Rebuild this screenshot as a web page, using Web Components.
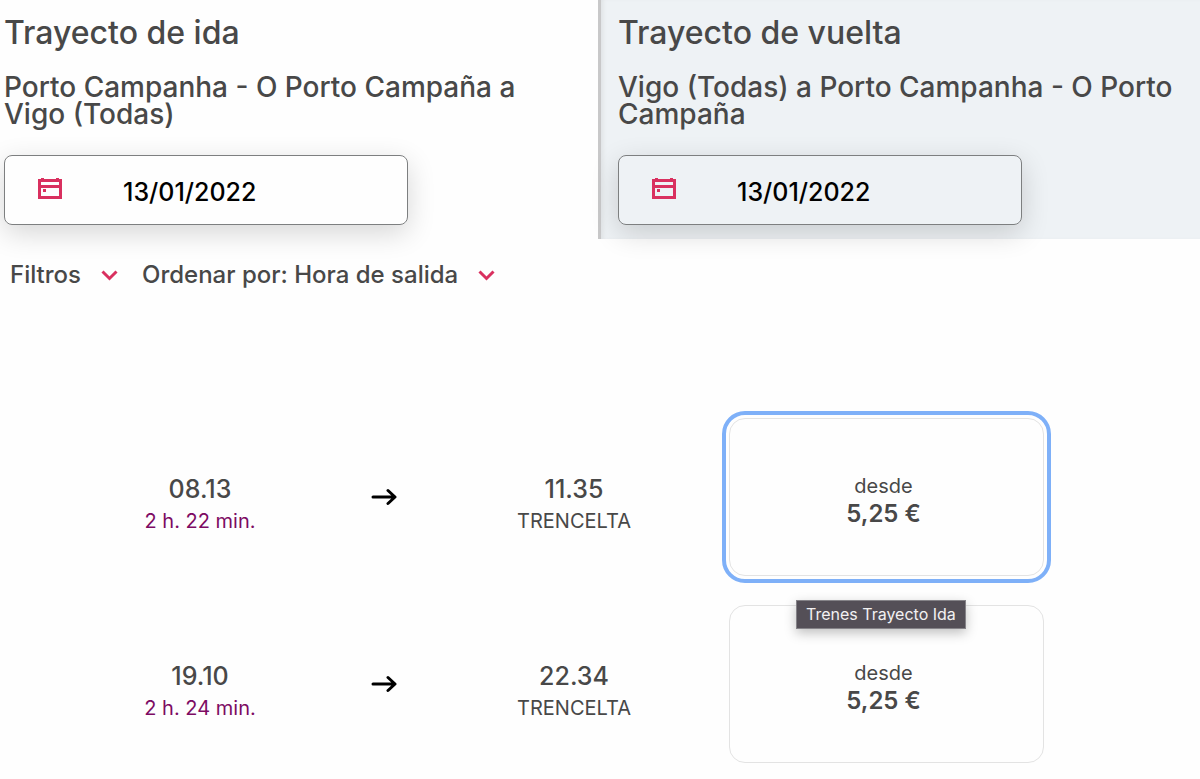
<!DOCTYPE html>
<html lang="es">
<head>
<meta charset="utf-8">
<meta name="viewport" content="width=device-width, initial-scale=1">
<title>Trayectos</title>
<style>
  body { margin: 0; background: #fefefe; color: #484848; font-family: Inter, "Liberation Sans", sans-serif; }
</style>
</head>
<body>
<trip-page></trip-page>

<template id="trip-page">
  <style>
    :host { display: block; }
    .journeys { display: grid; grid-template-columns: 1fr 1fr; }
    .results { padding: 109px 13% 16px 9%; display: grid; gap: 29px; }
  </style>
  <header class="journeys">
    <journey-panel date="13/01/2022">
      <span slot="title">Trayecto de ida</span>
      <span slot="route">Porto Campanha - O Porto Campaña a Vigo (Todas)</span>
    </journey-panel>
    <journey-panel date="13/01/2022" inactive>
      <span slot="title">Trayecto de vuelta</span>
      <span slot="route">Vigo (Todas) a Porto Campanha - O Porto Campaña</span>
    </journey-panel>
  </header>
  <filter-bar></filter-bar>
  <main class="results">
    <train-row depart="08.13" duration="2 h. 22 min." arrive="11.35" train="TRENCELTA" price="5,25 €" tip="Trenes Trayecto Ida" selected></train-row>
    <train-row depart="19.10" duration="2 h. 24 min." arrive="22.34" train="TRENCELTA" price="5,25 €"></train-row>
  </main>
</template>

<template id="journey-panel">
  <style>
    :host { display: block; box-sizing: border-box; padding: 16px 24px 14px 4px; }
    :host([inactive]) { background: #eef2f5; border-left: 3px solid #c8c8c9; padding-left: 17px; box-shadow: inset 4px 0 4px -2px #dfe2e4; margin-left: -2px; }
    h1 { margin: 0; font-size: 32px; line-height: 34px; font-weight: 500; }
    h2 { margin: 24px 0 27px; font-size: 28px; line-height: 27px; font-weight: 500; }
  </style>
  <h1><slot name="title"></slot></h1>
  <h2><slot name="route"></slot></h2>
  <date-field></date-field>
</template>

<template id="date-field">
  <style>
    :host { display: block; max-width: 404px; }
    label { display: flex; align-items: center; box-sizing: border-box; height: 70px; padding: 0 32px; border: 1px solid #7d7f80; border-radius: 8px; box-shadow: 0 8px 28px rgba(0, 0, 0, .16); }
    svg { flex: none; width: 26px; height: 26px; margin-bottom: 4px; }
    input { flex: 1; min-width: 0; margin: 0 0 0 60px; padding: 4px 0 0; border: 0; outline: 0; background: none; color: #000; font: 500 25px/32px Inter, "Liberation Sans", sans-serif; }
  </style>
  <label>
    <svg viewBox="0 0 26 26" fill="#d9305f" aria-hidden="true"><path fill-rule="evenodd" d="M1 4h3V3h3v1h12V3h3v1h3v20H1zm3 3v3h18V7zm0 6v8h18v-8z"/><path d="M6 14h3v3H6z"/></svg>
    <input type="text" aria-label="Fecha del trayecto">
  </label>
</template>

<template id="filter-bar">
  <style>
    :host { display: flex; gap: 24px; padding: 20px 10px 18px; }
    button { display: flex; align-items: center; gap: 20px; margin: 0; padding: 0; border: 0; background: none; color: inherit; cursor: pointer; font: 500 24px/32px Inter, "Liberation Sans", sans-serif; }
    svg { width: 17px; height: 12px; }
  </style>
  <button type="button"><span>Filtros</span><svg viewBox="0 0 17 12" fill="none" stroke="#d9305f" stroke-width="3" aria-hidden="true"><path d="M1.5 2.5l7 7 7-7"/></svg></button>
  <button type="button"><span>Ordenar por: Hora de salida</span><svg viewBox="0 0 17 12" fill="none" stroke="#d9305f" stroke-width="3" aria-hidden="true"><path d="M1.5 2.5l7 7 7-7"/></svg></button>
</template>

<template id="train-row">
  <style>
    :host { display: grid; grid-template-columns: 46fr 46fr 49fr 93fr; align-items: center; text-align: center; }
    .stop { padding-top: 16px; }
    p { margin: 0; }
    .time { font-size: 25px; line-height: 32px; font-weight: 500; }
    .note { font-size: 20px; line-height: 32px; }
    .duration { color: #7d0b63; }
    .arrow svg { display: block; width: 26px; height: 18px; margin: 0 auto; }
    fare-card { margin-left: 57px; }
  </style>
  <div class="stop"><p class="time depart"></p><p class="note duration"></p></div>
  <div class="arrow"><svg viewBox="0 0 26 18" fill="none" stroke="#000" stroke-width="3" stroke-linecap="round" stroke-linejoin="round" aria-hidden="true"><path d="M2 9h21M17 2.5L24 9l-7 6.5"/></svg></div>
  <div class="stop"><p class="time arrive"></p><p class="note train"></p></div>
  <fare-card></fare-card>
</template>

<template id="fare-card">
  <style>
    :host { display: block; position: relative; }
    button { display: block; box-sizing: border-box; width: 100%; height: 158px; margin: 0; padding: 6px 6px 0 0; border: 1px solid #e3e3e3; border-radius: 16px; background: none; color: inherit; cursor: pointer; font-family: inherit; }
    :host([selected]) button { outline: 4px solid #7eb0f8; outline-offset: 3px; }
    span { display: block; font-size: 20px; line-height: 28px; }
    strong { display: block; font-size: 24px; line-height: 28px; font-weight: 600; }
    .tip { position: absolute; z-index: 1; top: 182px; left: 67px; box-sizing: border-box; padding: 0 9px; border: 1px solid #858388; background: #544f57; color: #f2f1f2; font-size: 16px; line-height: 27px; white-space: nowrap; box-shadow: 0 4px 12px rgba(0, 0, 0, .25); }
    .tip:empty { display: none; }
  </style>
  <button type="button"><span>desde</span><strong></strong></button>
  <div class="tip" role="tooltip"></div>
</template>

<script>
  class TemplateElement extends HTMLElement {
    constructor() {
      super();
      const template = document.getElementById(this.localName);
      this.attachShadow({ mode: "open" }).append(template.content.cloneNode(true));
    }
    find(selector) { return this.shadowRoot.querySelector(selector); }
    attr(name) { return this.getAttribute(name) || ""; }
  }

  class DateField extends TemplateElement {
    connectedCallback() { this.find("input").value = this.attr("value"); }
    static get observedAttributes() { return ["value"]; }
    attributeChangedCallback() { this.find("input").value = this.attr("value"); }
  }

  class JourneyPanel extends TemplateElement {
    connectedCallback() { this.find("date-field").setAttribute("value", this.attr("date")); }
  }

  class FilterBar extends TemplateElement {}

  class FareCard extends TemplateElement {
    connectedCallback() {
      this.find("strong").textContent = this.attr("price");
      this.find(".tip").textContent = this.attr("tip");
    }
    static get observedAttributes() { return ["price", "tip"]; }
    attributeChangedCallback() { this.connectedCallback(); }
  }

  class TrainRow extends TemplateElement {
    connectedCallback() {
      for (const name of ["depart", "duration", "arrive", "train"]) {
        this.find("." + name).textContent = this.attr(name);
      }
      const card = this.find("fare-card");
      card.setAttribute("price", this.attr("price"));
      card.setAttribute("tip", this.attr("tip"));
      card.toggleAttribute("selected", this.hasAttribute("selected"));
    }
  }

  class TripPage extends TemplateElement {}

  customElements.define("date-field", DateField);
  customElements.define("journey-panel", JourneyPanel);
  customElements.define("filter-bar", FilterBar);
  customElements.define("fare-card", FareCard);
  customElements.define("train-row", TrainRow);
  customElements.define("trip-page", TripPage);
</script>
</body>
</html>
